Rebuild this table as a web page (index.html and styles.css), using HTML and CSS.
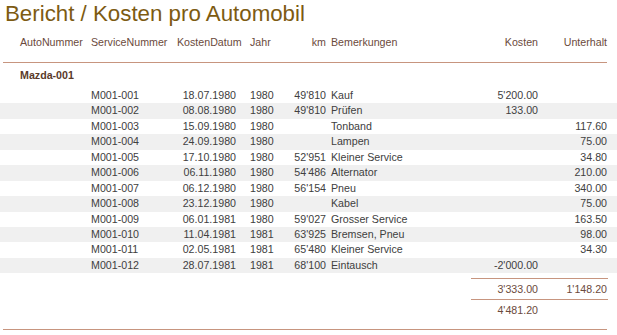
FILE: index.html
```html
<!DOCTYPE html>
<html>
<head>
<meta charset="utf-8">
<link rel="stylesheet" href="styles.css">
</head>
<body>
<div class="report">
  <h1 class="title">Bericht / Kosten pro Automobil</h1>
  <div class="row head">
    <span></span><span>AutoNummer</span><span>ServiceNummer</span><span class="r">KostenDatum</span><span class="jahr">Jahr</span><span class="r">km</span><span class="bem">Bemerkungen</span><span class="r">Kosten</span><span class="r">Unterhalt</span>
  </div>
  <div class="group">Mazda-001</div>
  <div class="rows">
    <div class="row"><span></span><span></span><span>M001-001</span><span class="r">18.07.1980</span><span class="jahr">1980</span><span class="r">49'810</span><span class="bem">Kauf</span><span class="r">5'200.00</span><span class="r"></span></div>
    <div class="row"><span></span><span></span><span>M001-002</span><span class="r">08.08.1980</span><span class="jahr">1980</span><span class="r">49'810</span><span class="bem">Prüfen</span><span class="r">133.00</span><span class="r"></span></div>
    <div class="row"><span></span><span></span><span>M001-003</span><span class="r">15.09.1980</span><span class="jahr">1980</span><span class="r"></span><span class="bem">Tonband</span><span class="r"></span><span class="r">117.60</span></div>
    <div class="row"><span></span><span></span><span>M001-004</span><span class="r">24.09.1980</span><span class="jahr">1980</span><span class="r"></span><span class="bem">Lampen</span><span class="r"></span><span class="r">75.00</span></div>
    <div class="row"><span></span><span></span><span>M001-005</span><span class="r">17.10.1980</span><span class="jahr">1980</span><span class="r">52'951</span><span class="bem">Kleiner Service</span><span class="r"></span><span class="r">34.80</span></div>
    <div class="row"><span></span><span></span><span>M001-006</span><span class="r">06.11.1980</span><span class="jahr">1980</span><span class="r">54'486</span><span class="bem">Alternator</span><span class="r"></span><span class="r">210.00</span></div>
    <div class="row"><span></span><span></span><span>M001-007</span><span class="r">06.12.1980</span><span class="jahr">1980</span><span class="r">56'154</span><span class="bem">Pneu</span><span class="r"></span><span class="r">340.00</span></div>
    <div class="row"><span></span><span></span><span>M001-008</span><span class="r">23.12.1980</span><span class="jahr">1980</span><span class="r"></span><span class="bem">Kabel</span><span class="r"></span><span class="r">75.00</span></div>
    <div class="row"><span></span><span></span><span>M001-009</span><span class="r">06.01.1981</span><span class="jahr">1980</span><span class="r">59'027</span><span class="bem">Grosser Service</span><span class="r"></span><span class="r">163.50</span></div>
    <div class="row"><span></span><span></span><span>M001-010</span><span class="r">11.04.1981</span><span class="jahr">1981</span><span class="r">63'925</span><span class="bem">Bremsen, Pneu</span><span class="r"></span><span class="r">98.00</span></div>
    <div class="row"><span></span><span></span><span>M001-011</span><span class="r">02.05.1981</span><span class="jahr">1981</span><span class="r">65'480</span><span class="bem">Kleiner Service</span><span class="r"></span><span class="r">34.30</span></div>
    <div class="row"><span></span><span></span><span>M001-012</span><span class="r">28.07.1981</span><span class="jahr">1981</span><span class="r">68'100</span><span class="bem">Eintausch</span><span class="r">-2'000.00</span><span class="r"></span></div>
  </div>
  <div class="totals">
    <div class="tot-row sum"><span class="r">3'333.00</span><span class="r">1'148.20</span></div>
    <div class="tot-row grand"><span class="r">4'481.20</span><span></span></div>
  </div>
  <div class="endline"></div>
</div>
</body>
</html>
```

FILE: styles.css
```css
html, body {
  margin: 0;
  padding: 0;
  background: #ffffff;
}
body {
  font-family: "Liberation Sans", Arial, sans-serif;
  font-size: 10.67px;
  color: #404040;
}
.report {
  width: 617px;
}
.title {
  margin: 0;
  padding: 1px 0 0 5px;
  font-size: 22.3px;
  font-weight: normal;
  line-height: 26px;
  color: #7d5b12;
}
.row {
  display: grid;
  grid-template-columns: 20px 71px 86px 59px 54px 36px 144px 68px 69px;
  height: 15.45px;
  line-height: 15.45px;
  white-space: nowrap;
}
.row .r { text-align: right; }
.row .jahr { padding-left: 14px; }
.row .bem { padding-left: 5px; }
.head {
  margin-top: 7px;
  color: #6b4a3c;
  height: 16px;
  line-height: 16px;
  padding-bottom: 12px;
  border-bottom: 1px solid #c7957f;
  margin-left: 3px;
  margin-right: 10px;
  grid-template-columns: 17px 71px 86px 59px 54px 36px 144px 68px 69px;
}
.group {
  padding-left: 20px;
  font-weight: bold;
  color: #5a3a2a;
  line-height: 16px;
  margin-top: 4px;
  margin-bottom: 5px;
}
.rows .row:nth-child(even) {
  background: #f0f0f0;
}
.totals {
  margin-left: 471px;
  width: 137px;
  margin-top: 5px;
}
.tot-row {
  display: grid;
  grid-template-columns: 67px 69px;
  height: 20px;
  line-height: 20px;
  border-top: 1px solid #c7957f;
  color: #6b4a3c;
}
.tot-row .r { text-align: right; }
.endline {
  margin: 9px 10px 0 3px;
  border-top: 1px solid #c7957f;
}
```
